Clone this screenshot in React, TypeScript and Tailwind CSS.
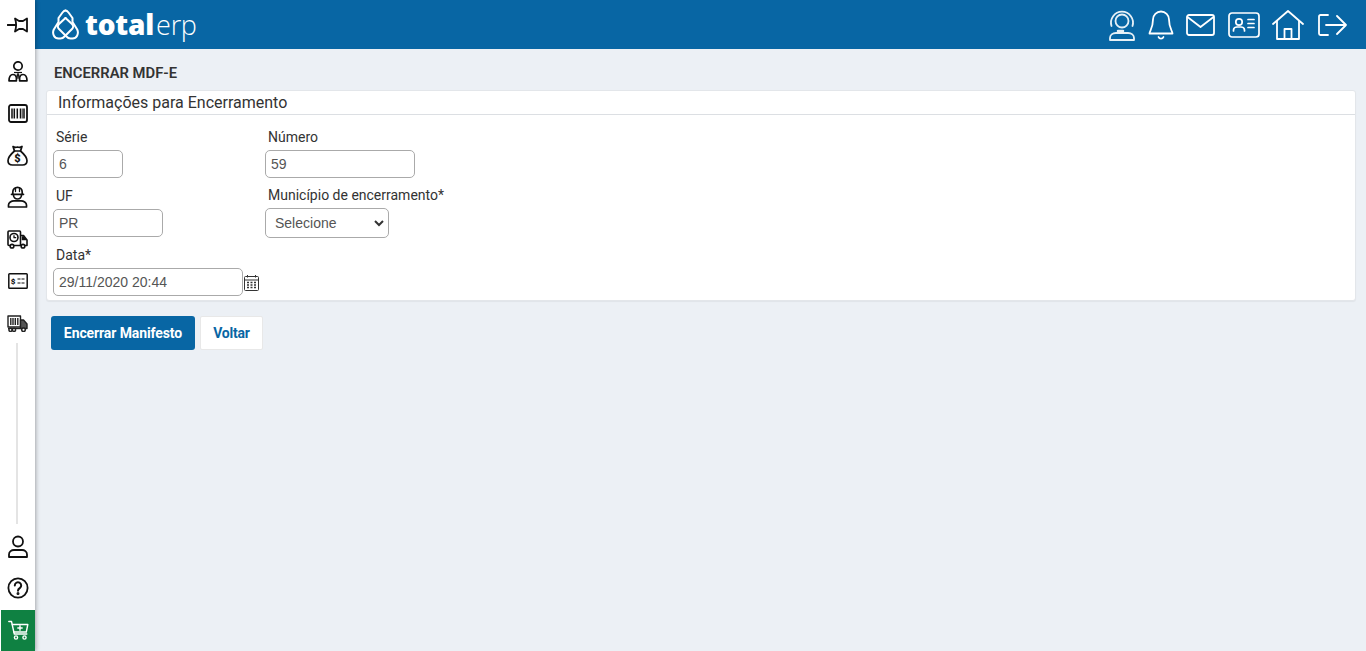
import React from "react";

const Item = ({ children }: { children: React.ReactNode }) => (
  <div className="h-[42px] shrink-0 flex items-center justify-center text-[#111]">{children}</div>
);

const Field = ({ label, value, w }: { label: string; value: string; w: string }) => (
  <div className="flex flex-col">
    <label className="pl-[3px] h-[23px] text-[14px] leading-[20px] text-[#333]">{label}</label>
    <div className={`${w} h-[28px] border border-[#aaa] rounded-[5px] pl-[5px] flex items-center font-['Liberation_Sans',sans-serif] text-[14px] text-[#555] bg-white`}>{value}</div>
  </div>
);

export default function App() {
  return (
    <div className="w-[1366px] h-[651px] flex bg-[#ecf0f5] overflow-hidden font-['Roboto',sans-serif]">
      <aside className="w-[35px] shrink-0 bg-white flex flex-col shadow-[1px_0_4px_rgba(0,0,0,0.3)] z-10">
        <div className="h-[46px] shrink-0 flex items-center justify-center pt-[4px] text-[#111]">
          <svg width="21" height="16" viewBox="0 0 21 16" fill="none" stroke="currentColor" strokeWidth="1.800" strokeLinejoin="round" strokeLinecap="round">
            <path d="M0.500 8H8.500" />
            <path d="M8 1.500l4 2.500h4l4-2.500v13l-4-2.500h-4l-4 2.500c1.200-3.500 1.200-9.500 0-13z" />
          </svg>
        </div>
        <div className="h-[4px] shrink-0" />
        <Item>
          <svg width="20" height="21" viewBox="0 0 20 21" fill="none" stroke="currentColor" strokeWidth="1.700" strokeLinejoin="round">
            <circle cx="10" cy="5" r="4.200" />
            <path d="M1 19.800c0-4 1.500-6.300 4-6.300 1.500 0 3 1 3.400 3v3.300zM19 19.800c0-4-1.500-6.300-4-6.300-1.500 0-3 1-3.400 3v3.300z" />
            <path d="M10 12l1.200 2-1.200 4-1.200-4z" fill="currentColor" strokeWidth="0.500" />
            <path d="M6 11.500h8" strokeWidth="1.200" />
          </svg>
        </Item>
        <Item>
          <svg width="20" height="19" viewBox="0 0 20 19" fill="none" stroke="currentColor">
            <rect x="1" y="1" width="18" height="17" rx="2" strokeWidth="1.800" />
            <path d="M4 4.500v10M6.300 4.500v10M9.300 4.500v10M12.500 4.500v10M16 4.500v10" strokeWidth="1.500" />
            <path d="M14.300 4.500v10" strokeWidth="0.800" />
          </svg>
        </Item>
        <Item>
          <svg width="21" height="21" viewBox="0 0 21 21" fill="none" stroke="currentColor" strokeWidth="1.700" strokeLinejoin="round" strokeLinecap="round">
            <path d="M6 1.500c1.500 1 3 1 4.500.5 1.500.5 3 .5 4.500-.5l-1.500 4.500h-6z" />
            <path d="M7.500 6C4 9 1 12.500 1 15.800 1 18.500 3 20 5.500 20h10c2.500 0 4.500-1.500 4.500-4.200C20 12.500 17 9 13.500 6" />
            <text x="10.500" y="17" fontSize="11" fontWeight="900" fill="currentColor" stroke="none" textAnchor="middle" fontFamily="Roboto">$</text>
          </svg>
        </Item>
        <Item>
          <svg width="21" height="22" viewBox="0 0 21 22" fill="none" stroke="currentColor" strokeWidth="1.700" strokeLinejoin="round" strokeLinecap="round">
            <path d="M5.800 8V6a4.700 4.700 0 0 1 9.400 0v2" />
            <path d="M4.500 8.300h12" />
            <path d="M8.500 1.800v3.700M12.500 1.800v3.700" strokeWidth="1.300" />
            <path d="M6.500 9a4 4 0 0 0 8 0" />
            <path d="M1.500 21v-2c0-2.500 3-4.200 5.500-4.200h7c2.500 0 5.500 1.700 5.500 4.200v2z" />
          </svg>
        </Item>
        <Item>
          <svg width="21" height="19" viewBox="0 0 21 19" fill="none" stroke="currentColor" strokeWidth="1.600" strokeLinejoin="round">
            <path d="M3 15.500H2a1 1 0 0 1-1-1V2a1 1 0 0 1 1-1h10.500a1 1 0 0 1 1 1v13.500H7" />
            <path d="M13.500 5.500h3l3.500 4.500v5.500h-2M13.500 15.500h.500" />
            <path d="M15 6.500h2l2.500 3.500H15z" fill="currentColor" strokeWidth="0.500" />
            <circle cx="5" cy="16.200" r="1.800" />
            <circle cx="16" cy="16.200" r="1.800" />
            <circle cx="7" cy="7.500" r="4" />
            <path d="M7 5.200v2.500h2.200" strokeWidth="1.300" />
          </svg>
        </Item>
        <Item>
          <svg width="20" height="16" viewBox="0 0 20 16" fill="none" stroke="currentColor" strokeWidth="1.500">
            <rect x="0.800" y="0.800" width="18.400" height="14.400" rx="0.800" />
            <path d="M9.500 6h3M13.500 6h3M9.500 10h3M13.500 10h3" strokeWidth="1.200" />
            <text x="5" y="11" fontSize="8" fontWeight="900" fill="currentColor" stroke="none" textAnchor="middle" fontFamily="Roboto">$</text>
          </svg>
        </Item>
        <Item>
          <svg width="21" height="17" viewBox="0 0 21 17" fill="none" stroke="#222" strokeWidth="1.400" strokeLinejoin="round">
            <path d="M1 1h12.500v11H1zM3.800 3v7M6 3v7M8.300 3v7M10.800 3v7" />
            <path d="M1 13.500h12.500" />
            <path d="M13.500 5h3l3.500 4v4.500h-6.500z" fill="#555" />
            <circle cx="3.500" cy="14.800" r="1.600" fill="#fff" strokeWidth="1.500" />
            <circle cx="7" cy="14.800" r="1.600" fill="#fff" strokeWidth="1.500" />
            <circle cx="16.500" cy="14.800" r="1.800" fill="#fff" strokeWidth="1.500" />
          </svg>
        </Item>
        <div className="flex-1 flex pl-[16px] -mt-[1px] pb-[1px]">
          <div className="w-[2px] bg-[#e4e4e4]" />
        </div>
        <Item>
          <svg width="20" height="23" viewBox="0 0 20 23" fill="none" stroke="currentColor" strokeWidth="1.800" strokeLinejoin="round">
            <circle cx="10" cy="6.500" r="5" />
            <path d="M1 22v-2.500c0-3 2.500-4.500 5-4.500h8c2.500 0 5 1.500 5 4.500V22z" />
          </svg>
        </Item>
        <Item>
          <svg width="22" height="22" viewBox="0 0 22 22" fill="none" stroke="currentColor" strokeWidth="1.800" strokeLinecap="round">
            <circle cx="11" cy="11" r="9.600" />
            <path d="M7.800 8.500a3.200 3.200 0 1 1 5 2.600c-1 .700-1.800 1.200-1.800 2.700" strokeWidth="2" />
            <circle cx="11" cy="16.500" r="0.600" fill="currentColor" />
          </svg>
        </Item>
        <div className="h-[1px] shrink-0" />
        <div className="h-[41px] ml-[1px] shrink-0 bg-[#0f8142] flex items-center justify-center">
          <svg width="21" height="21" viewBox="0 0 21 21" fill="none" stroke="#fff" strokeWidth="1.400" strokeLinecap="round" strokeLinejoin="round">
            <path d="M0.800 1.500h2.700l2.800 12.500h12.500" />
            <path d="M4.300 4.500h15.500l-1.500 7.500H5.800" />
            <path d="M12 5.800v4.400M9.800 8h4.400" />
            <circle cx="8" cy="17.500" r="1.600" />
            <circle cx="16.500" cy="17.500" r="1.600" />
          </svg>
        </div>
      </aside>

      <div className="flex-1 flex flex-col min-w-0">
        <header className="h-[49px] shrink-0 bg-[#0866a4] flex items-center justify-between pl-[17px] pr-[19px] text-white">
          <div className="flex items-center">
            <svg width="27" height="31" viewBox="0 0 27 31" fill="none" stroke="#fff" strokeWidth="2" strokeLinejoin="round" strokeLinecap="round">
              <path d="M13.500 1.500c-1 0-2 .7-3 2L6.500 9v4L1.800 20.500C-.2 25 2.500 29.500 6.500 29.500h2c1.500 0 3-.8 4-2L20 20c1.500-1.500 1.500-3.500 0-5l-6.500-6" />
              <path d="M13.500 1.500c1 0 2 .7 3 2L20.500 9v4l4.700 7.500c2 4.500-.7 9-4.700 9h-2c-1.500 0-3-.8-4-2L7 20c-1.500-1.500-1.500-3.500 0-5l6.500-6" />
            </svg>
            <span className="ml-[6px] font-['Open_Sans',sans-serif] font-extrabold text-[28px] leading-none tracking-[-0.2px] mt-[-1px]">total</span>
            <span className="ml-[2px] font-['Open_Sans',sans-serif] font-light text-[27px] leading-none tracking-[-0.3px] mt-[-1px]">erp</span>
          </div>
          <div className="flex items-center">
            <svg width="28" height="32" viewBox="0 0 28 32" fill="none" stroke="#fff" strokeOpacity="0.9" strokeWidth="1.800" strokeLinecap="round" strokeLinejoin="round">
              <circle cx="14" cy="12" r="6.500" />
              <path d="M3.500 17a11 11 0 1 1 21 0" />
              <path d="M10 22h5" strokeWidth="2.500" />
              <path d="M2 31v-2c0-3 2.500-5 6-5h12c3.500 0 6 2 6 5v2z" />
            </svg>
            <div className="w-[12px]" />
            <svg width="26" height="30" viewBox="0 0 26 30" fill="none" stroke="#fff" strokeWidth="1.800" strokeLinecap="round" strokeLinejoin="round">
              <path d="M13 1.500a8 8 0 0 0-8 8c0 9-3.500 11.500-3.500 14h23C24.500 21 21 18.500 21 9.500a8 8 0 0 0-8-8z" />
              <path d="M10.500 27a2.700 2.700 0 0 0 5 0" />
            </svg>
            <div className="w-[12px]" />
            <svg width="29" height="22" viewBox="0 0 29 22" fill="none" stroke="#fff" strokeWidth="1.800" strokeLinecap="round" strokeLinejoin="round">
              <rect x="1" y="1" width="27" height="20" rx="2" />
              <path d="M1.500 3 14.500 13 27.500 3" />
            </svg>
            <div className="w-[13px]" />
            <svg width="32" height="26" viewBox="0 0 32 26" fill="none" stroke="#fff" strokeWidth="1.700" strokeLinecap="round" strokeLinejoin="round">
              <rect x="1" y="1" width="30" height="24" rx="3" />
              <circle cx="11" cy="10" r="3.200" />
              <path d="M5.500 19v-1c0-2 2-3 3.500-3h4c1.500 0 3.500 1 3.500 3v1M20 7.500h6M20 11.500h6M20 15.500h6" />
            </svg>
            <div className="w-[12px]" />
            <svg width="32" height="30" viewBox="0 0 32 30" fill="none" stroke="#fff" strokeWidth="1.800" strokeLinecap="round" strokeLinejoin="round">
              <path d="M1 14 16 1l15 13" />
              <path d="M5 11v18h22V11M12.500 29V19h7v10" />
            </svg>
            <div className="w-[14px]" />
            <svg width="29" height="22" viewBox="0 0 29 22" fill="none" stroke="#fff" strokeWidth="1.800" strokeLinecap="round" strokeLinejoin="round">
              <path d="M10 1H2.500A1.500 1.500 0 0 0 1 2.500v17A1.500 1.500 0 0 0 2.500 21H10M8 11h20M19 2l9 9-9 9" />
            </svg>
          </div>
        </header>

        <main className="flex-1 pl-[11px] pr-[10px]">
          <h1 className="h-[41px] pl-[8px] pt-[16px] text-[14.8px] leading-[17px] font-semibold text-[#333]">ENCERRAR MDF-E</h1>
          <section className="bg-white rounded-[3px] border border-[#e3e6ea] shadow-[0_1px_1px_rgba(0,0,0,0.05)] h-[211px]">
            <div className="h-[24px] border-b border-[#dcdfe3] pl-[11px] text-[16px] leading-[24px] text-[#333]">Informações para Encerramento</div>
            <div className="pl-[6px] pt-[12px] flex">
              <div className="w-[212px] flex flex-col gap-[8px]">
                <Field label="Série" value="6" w="w-[70px]" />
                <Field label="UF" value="PR" w="w-[110px]" />
                <div className="flex flex-col">
                  <label className="pl-[3px] h-[23px] text-[14px] leading-[20px] text-[#333]">Data*</label>
                  <div className="flex items-center">
                    <div className="w-[190px] h-[28px] border border-[#aaa] rounded-[5px] pl-[5px] flex items-center font-['Liberation_Sans',sans-serif] text-[14px] text-[#555]">29/11/2020 20:44</div>
                    <svg className="ml-[1px] mt-[1px]" width="15" height="17" viewBox="0 0 15 17" fill="none" stroke="#333">
                      <rect x="0.500" y="2.500" width="14" height="14" rx="1" />
                      <path d="M0.500 6h14M3.500 1v2.500M11.500 1v2.500" />
                      <path d="M3 8.500h2M6.500 8.500h2M10 8.500h2M3 11h2M6.500 11h2M10 11h2M3 13.500h2M6.500 13.500h2M10 13.500h2" strokeWidth="1.500" />
                    </svg>
                  </div>
                </div>
              </div>
              <div className="flex flex-col">
                <Field label="Número" value="59" w="w-[150px]" />
                <div className="flex flex-col mt-[7px]">
                  <label className="pl-[3px] h-[23px] text-[14px] leading-[20px] text-[#333]">Município de encerramento*</label>
                  <div className="w-[124px] h-[30px] border border-[#aaa] rounded-[5px] pl-[9px] pr-[4px] flex items-center justify-between font-['Liberation_Sans',sans-serif] text-[14px] text-[#555]">
                    Selecione
                    <svg width="10" height="7" viewBox="0 0 10 7" fill="none" stroke="#333" strokeWidth="2"><path d="M1 1l4 4 4-4" /></svg>
                  </div>
                </div>
              </div>
            </div>
          </section>
          <div className="flex mt-[15px] ml-[5px] gap-[5px]">
            <button className="w-[144px] h-[34px] rounded-[3px] bg-[#0866a4] text-white text-[14px] font-bold tracking-[-0.1px]">Encerrar Manifesto</button>
            <button className="w-[63px] h-[34px] rounded-[2px] bg-white border border-[#e8e8e8] text-[#0866a4] text-[14px] font-bold tracking-[-0.2px]">Voltar</button>
          </div>
        </main>
      </div>
    </div>
  );
}
